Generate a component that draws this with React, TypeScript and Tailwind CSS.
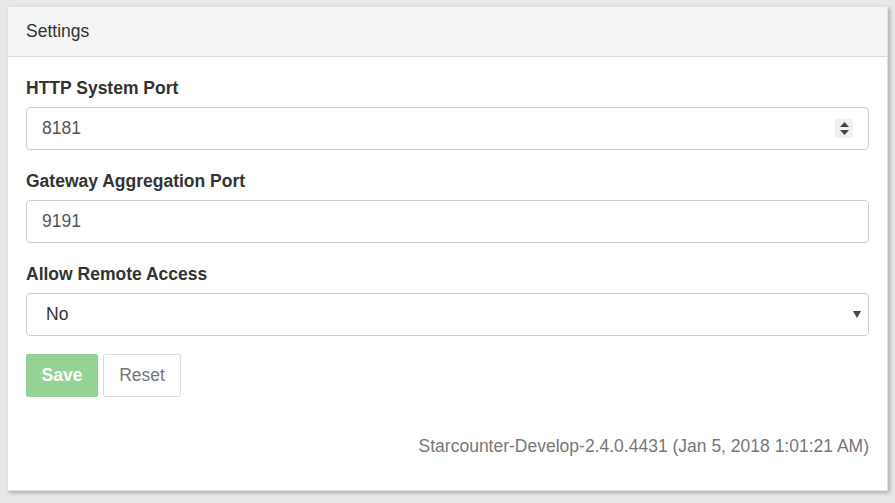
import { useState } from "react";

const font = { fontFamily: '"Liberation Sans", Arial, sans-serif' };

function Field({ label, last, children }: { label: string; last?: boolean; children: React.ReactNode }) {
  return (
    <div className={last ? "mb-[18px]" : "mb-[20px]"}>
      <label className="mb-[7px] block h-[23px] text-[17.5px] font-bold leading-[23px] text-[#333]">{label}</label>
      {children}
    </div>
  );
}

export default function App() {
  const [httpPort, setHttpPort] = useState("8181");
  const [gwPort, setGwPort] = useState("9191");
  const [remote, setRemote] = useState("No");

  return (
    <div className="min-h-[503px] bg-[#e8e8e8] pl-[7px] pr-[7px] pt-[6px]" style={font}>
      <div className="border border-[#e3e3e3] bg-white shadow-[2px_2px_4px_rgba(0,0,0,0.25)]">
        {/* Header */}
        <div className="flex h-[50px] items-center border-b border-[#ddd] bg-[#f5f5f5] px-[18px] text-[17.5px] text-[#333]">
          Settings
        </div>

        {/* Body */}
        <div className="px-[18px] pb-[32px] pt-[20px]">
          <Field label="HTTP System Port">
            <div className="flex h-[43px] items-center rounded-[4px] border border-[#ccc] pl-[15px] pr-[15px] text-[17.5px] text-[#555]">
              <input
                value={httpPort}
                onChange={(e) => setHttpPort(e.target.value)}
                className="flex-1 bg-transparent outline-none"
              />
              <span className="flex h-[19px] w-[18px] flex-col items-center justify-center gap-[3px] bg-[#f0f0f0]">
                <svg width="9" height="5" viewBox="0 0 9 5"><path d="M4.5 0L9 5H0z" fill="#444" /></svg>
                <svg width="9" height="5" viewBox="0 0 9 5"><path d="M0 0h9L4.5 5z" fill="#444" /></svg>
              </span>
            </div>
          </Field>

          <Field label="Gateway Aggregation Port">
            <input
              value={gwPort}
              onChange={(e) => setGwPort(e.target.value)}
              className="block h-[43px] w-full rounded-[4px] border border-[#ccc] px-[15px] text-[17.5px] text-[#555] outline-none"
            />
          </Field>

          <Field label="Allow Remote Access" last>
            <div className="relative">
              <select
                value={remote}
                onChange={(e) => setRemote(e.target.value)}
                className="block h-[43px] w-full appearance-none rounded-[4px] border border-[#ccc] bg-white pl-[19px] text-[17.5px] text-[#333] outline-none"
              >
                <option>No</option>
                <option>Yes</option>
              </select>
              <svg className="pointer-events-none absolute right-[8px] top-[18px]" width="8" height="7" viewBox="0 0 8 7">
                <path d="M0 0h8L4 7z" fill="#444" />
              </svg>
            </div>
          </Field>

          <div className="flex gap-[5px]">
            <button
              type="button"
              className="h-[43px] w-[72px] rounded-[2px] border border-[#8fcf8f] bg-[#94d394] text-[17.5px] font-bold text-white"
            >
              Save
            </button>
            <button
              type="button"
              onClick={() => {
                setHttpPort("8181");
                setGwPort("9191");
                setRemote("No");
              }}
              className="h-[43px] w-[78px] rounded-[2px] border border-[#ddd] bg-white text-[17.5px] text-[#777]"
            >
              Reset
            </button>
          </div>

          <div className="mt-[38px] text-right text-[17.5px] leading-[23px] text-[#777]">
            Starcounter-Develop-2.4.0.4431 (Jan 5, 2018 1:01:21 AM)
          </div>
        </div>
      </div>
    </div>
  );
}
